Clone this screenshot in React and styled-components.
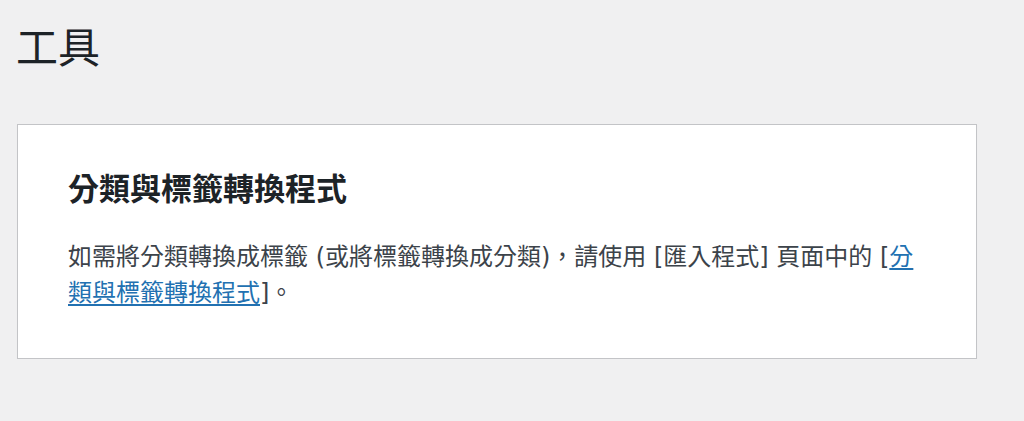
import React from "react";
import styled, { createGlobalStyle } from "styled-components";

const GlobalStyle = createGlobalStyle`
  html, body {
    margin: 0;
    padding: 0;
    background-color: #f0f0f1;
  }
  body {
    font-family: "Noto Sans CJK TC", "Noto Sans", sans-serif;
    color: #3c434a;
  }
`;

const Wrap = styled.div`
  padding: 18px 0 0 17px;
`;

const PageTitle = styled.h1`
  margin: 0 0 0 -1px;
  font-size: 42px;
  font-weight: 400;
  line-height: 54px;
  color: #1d2327;
`;

const Card = styled.div`
  box-sizing: border-box;
  width: 960px;
  margin-top: 52px;
  padding: 42px 50px 47px 50px;
  background-color: #fff;
  border: 1px solid #c3c4c7;
  box-shadow: 0 1px 1px rgba(0, 0, 0, 0.04);
`;

const CardTitle = styled.h2`
  margin: 0 0 32px 0;
  font-size: 31px;
  font-weight: 700;
  line-height: 40px;
  color: #1d2327;
`;

const CardText = styled.p`
  margin: 0;
  font-family: "DejaVu Sans", "Noto Sans CJK TC", sans-serif;
  font-size: 24px;
  line-height: 36px;
  color: #3c434a;
`;

const Link = styled.a`
  color: #2271b1;
  text-decoration: underline;
  text-underline-offset: 3px;
`;

function App() {
  return (
    <>
      <GlobalStyle />
      <Wrap>
        <PageTitle>工具</PageTitle>
        <Card>
          <CardTitle>分類與標籤轉換程式</CardTitle>
          <CardText>
            如需將分類轉換成標籤 (或將標籤轉換成分類)，請使用 [匯入程式] 頁面中的 [
            <Link href="#">分類與標籤轉換程式</Link>]。
          </CardText>
        </Card>
      </Wrap>
    </>
  );
}

export default App;
